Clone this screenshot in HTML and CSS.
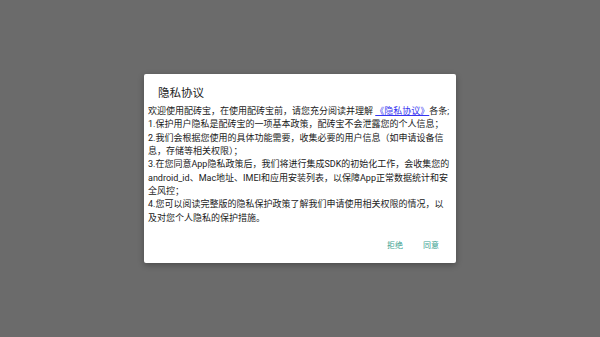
FILE: index.html
```html
<!DOCTYPE html>
<html lang="zh-CN">
<head>
    <meta charset="UTF-8">
    <meta name="viewport" content="width=device-width, initial-scale=1.0">
    <title>隐私协议</title>
    <link rel="stylesheet" href="styles.css">
</head>
<body>
    <div class="dialog">
        <h3 class="dialog-title">隐私协议</h3>
        <div class="dialog-body">
            <p>欢迎使用配砖宝，在使用配砖宝前，请您充分阅读并理解 <a href="#">《隐私协议》</a>各条;</p>
            <p>1.保护用户隐私是配砖宝的一项基本政策，配砖宝不会泄露您的个人信息；</p>
            <p>2.我们会根据您使用的具体功能需要，收集必要的用户信息（如申请设备信息，存储等相关权限）；</p>
            <p>3.在您同意App隐私政策后，我们将进行集成SDK的初始化工作，会收集您的android_id、Mac地址、IMEI和应用安装列表，以保障App正常数据统计和安全风控；</p>
            <p>4.您可以阅读完整版的隐私保护政策了解我们申请使用相关权限的情况，以及对您个人隐私的保护措施。</p>
        </div>
        <div class="dialog-actions">
            <button class="action-btn">拒绝</button>
            <button class="action-btn">同意</button>
        </div>
    </div>
</body>
</html>
```

FILE: styles.css
```css
html, body {
    height: 100%;
}
body {
    margin: 0;
    background-color: #6b6b6b;
    font-family: Roboto, "Noto Sans CJK SC", sans-serif;
    display: flex;
    align-items: center;
    justify-content: center;
}
.dialog {
    width: 312px;
    box-sizing: border-box;
    padding: 11px 4px 9px 4px;
    background-color: #fff;
    border-radius: 2px;
    box-shadow: 0 2px 6px rgba(0, 0, 0, 0.3);
}
.dialog-title {
    margin: 0;
    padding-left: 10px;
    font-size: 11.5px;
    line-height: 16px;
    font-weight: normal;
    color: #212121;
}
.dialog-body {
    margin-top: 4px;
    width: 302px;
    font-size: 9px;
    line-height: 13.33px;
    color: #212121;
}
.dialog-body p {
    margin: 0;
}
.dialog-body a {
    color: #3535f0;
}
.dialog-actions {
    display: flex;
    justify-content: flex-end;
    gap: 20px;
    margin-top: 13px;
    padding-right: 13px;
}
.action-btn {
    border: none;
    background: none;
    padding: 0;
    font-family: inherit;
    font-size: 8px;
    line-height: 16px;
    color: #3a9f91;
    cursor: pointer;
}
```
